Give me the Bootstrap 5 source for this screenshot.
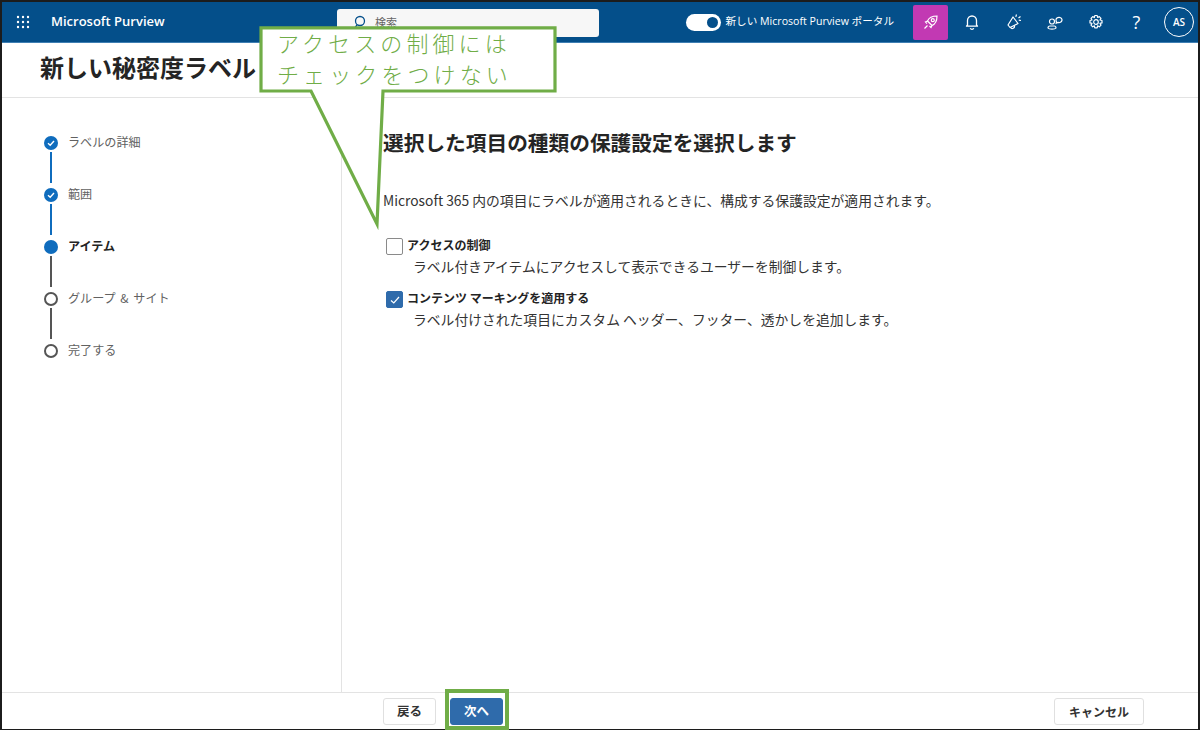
<!DOCTYPE html>
<html lang="ja"><head><meta charset="utf-8"><title>Purview</title>
<link href="https://cdn.jsdelivr.net/npm/bootstrap@5.3.0/dist/css/bootstrap.min.css" rel="stylesheet">
<style>
html,body{height:730px;overflow:hidden;background:#fff}
body{font-family:"Noto Sans CJK JP","Open Sans",sans-serif;color:#242424;font-size:12px;position:relative}
.frame{height:730px;width:1200px;border:2px solid #1c1c1c;border-bottom-width:1px;display:flex;flex-direction:column}
.topbar{height:41px;background:#044f8a;color:#fff;flex:none;border-bottom:1px solid #3f7fb3}
.brand{font-family:"Open Sans",sans-serif;font-weight:600;font-size:13px;margin-left:21px}
.waffle{margin-left:14px;display:block}
.searchbox{position:absolute;left:337px;top:9px;width:262px;height:28px;background:#f7f7f7;border-radius:3px;color:#666;font-size:11px;padding:5px 0 0 38px}
.searchbox svg{position:absolute;left:15px;top:5px}
.spacerbar{width:0;flex:1}
.swtch{width:35px;height:17px;background:#fff;border-radius:9px;position:relative;flex:none}
.swtch::after{content:"";position:absolute;right:3px;top:3px;width:11px;height:11px;border-radius:50%;background:#044f8a}
.portal{font-size:10.6px;margin:0 19px 0 5px;white-space:nowrap;font-family:"Open Sans","Noto Sans CJK JP",sans-serif}
.ticon{width:41px;height:35px;display:flex;align-items:center;justify-content:center;flex:none}
.ticon.pinkb{width:35px;background:#c239b3;border-radius:2px;margin-right:3px}
.ticon.plain{font-size:18px;font-family:"Open Sans",sans-serif}
.ticon.bellb{margin-right:1px}
.avatar{width:30px;height:30px;border:1px solid #fff;border-radius:50%;font-size:10px;font-weight:600;display:flex;align-items:center;justify-content:center;margin:0 4px 0 7px;font-family:"Open Sans",sans-serif;flex:none}
.titlerow{height:55px;flex:none;border-bottom:1px solid #e3e3e3;padding-left:38px;display:flex;align-items:center}
.titlerow h1{font-size:24px;font-weight:700;margin:0 0 5px;color:#242424}
.mainarea{flex:1;min-height:0;display:flex}
.leftrail{width:340px;border-right:1px solid #e3e3e3;padding:36px 0 0 42px;flex:none}
.stepitem{display:flex;height:52px;position:relative;color:#616161}
.stepitem b{color:#242424}
.dot{width:14px;height:14px;border-radius:50%;flex:none;margin-top:2px;display:flex;align-items:center;justify-content:center;background:#0f6cbd;margin-right:10px}
.dot.hollow{background:#fff;border:2px solid #555}
.stepitem:not(:last-child)::after{content:"";position:absolute;left:6px;top:18px;height:31px;width:2px;background:#0f6cbd}
.stepitem.graystep::after{background:#555 !important}
.steptext{line-height:17px;font-size:12.1px;margin-top:-1px;word-spacing:2px}
.content{padding:30px 0 0 41px;flex:1}
.content h2{font-size:20.7px;font-weight:700;margin:0 0 34px;line-height:28px;color:#242424}
.intro{font-size:13.8px;margin:0 0 26px;line-height:20px;color:#333}
.optrow{display:flex;margin-left:3px;margin-bottom:13px}
.cbx{width:17px;height:17px;border:1px solid #8a8a8a;border-radius:2px;background:#fff;flex:none;margin-right:4px;margin-top:2px;display:flex;align-items:center;justify-content:center}
.cbx.checked{background:#2f6bab;border-color:#2f6bab}
.opttitle{font-weight:700;font-size:12px;line-height:17px}
.optdesc{font-size:13.8px;line-height:20px;margin-left:6px;margin-top:3px;color:#333;white-space:nowrap}
.footerbar{height:37px;flex:none;border-top:1px solid #e3e3e3;display:flex;align-items:flex-start;padding-top:5px;position:relative}
.fbtn{height:27px;border:1px solid #e0e0e0;border-radius:3px;background:#fff;font-weight:700;font-size:12.5px;display:flex;align-items:center;justify-content:center;color:#333;padding:0}
.fbtn.backb{width:53px;margin-left:381px}
.fbtn.nextb{width:53px;margin-left:14px;background:#2f6bab;border-color:#2f6bab;color:#fff}
.fbtn.cancelb{width:90px;margin-left:auto;margin-right:54px;font-size:12px}
.highlight{position:absolute;left:445px;top:689px;width:64px;height:41px;border:4px solid #70ad47}
.callout{position:absolute;left:0;top:0;pointer-events:none}
.callouttext{position:absolute;left:277px;top:27px;width:270px;color:#70ad47;font-size:22px;line-height:31px;letter-spacing:4.1px;font-weight:300;white-space:nowrap;font-family:"Noto Sans CJK JP",sans-serif}
</style></head><body>
<div class="frame">
 <header class="topbar d-flex align-items-center">
  <svg class="waffle" width="14" height="14" viewBox="0 0 14 14" fill="#fff"><circle cx="2" cy="2" r="1.2"/><circle cx="7" cy="2" r="1.2"/><circle cx="12" cy="2" r="1.2"/><circle cx="2" cy="7" r="1.2"/><circle cx="7" cy="7" r="1.2"/><circle cx="12" cy="7" r="1.2"/><circle cx="2" cy="12" r="1.2"/><circle cx="7" cy="12" r="1.2"/><circle cx="12" cy="12" r="1.2"/></svg>
  <span class="brand">Microsoft Purview</span>
  <div class="spacerbar"></div>
  <span class="swtch"></span><span class="portal">新しい Microsoft Purview ポータル</span>
  <span class="ticon pinkb"><svg width="18" height="18" viewBox="0 0 18 18" fill="none" stroke="#fff" stroke-width="1.2"><path d="M5.500 8 C7 4.500 10.500 3 15 3 C15 7.500 13.500 11 10 12.500 Z"/><circle cx="10.800" cy="7.200" r="1.500"/><path d="M5.500 8 L3.500 9 L5 10.500M10 12.500 L9 14.500 L7.500 13M2.500 15.500 L5.500 12.500"/></svg></span>
  <span class="ticon plain bellb"><svg width="14" height="16" viewBox="0 0 14 16" fill="none" stroke="#fff" stroke-width="1.3"><path d="M2.500 11 V6.500 a4.500 4.500 0 0 1 9 0 V11 l1 1.200 H1.500 Z" stroke-linejoin="round"/><path d="M5.200 14.200 a2 2 0 0 0 3.600 0"/></svg></span>
  <span class="ticon plain"><svg width="18" height="18" viewBox="0 0 18 18" fill="none" stroke="#fff" stroke-width="1.200" stroke-linejoin="round"><path d="M8 4 L13 10.500 L5 14.500 L3 12 Z"/><path d="M5.500 14.300 a2 2 0 0 0 3.700 -1.800M11.500 1.500 l-.7 2.300M15.500 3.500 l-2 1.500M16 7.500 l-2.200 -.3"/></svg></span>
  <span class="ticon plain"><svg width="18" height="18" viewBox="0 0 18 18" fill="none" stroke="#fff" stroke-width="1.200"><circle cx="6" cy="8.500" r="2.500"/><path d="M2 15 c0 -1.200 1 -2 2 -2 h4.200 c1 0 1.800 .8 1.800 2 c-1 1.500 -7 1.500 -8 0 Z"/><path d="M10 7 a3 2.600 0 1 1 2 2.400 l-1.800 .8 l.3 -1.400 a2.500 2.500 0 0 1 -.5 -1.800 Z"/></svg></span>
  <span class="ticon plain"><svg width="16" height="16" viewBox="0 0 16 16" fill="none" stroke="#fff" stroke-width="1.2"><circle cx="8" cy="8" r="2.300"/><path d="M6.800 1.500 h2.400 l.4 2 1.700 -.9 1.700 1.700 -1 1.700 2 .5 v2.400 l-2 .5 1 1.700 -1.700 1.700 -1.700 -1 -.4 2 h-2.400 l-.4 -2 -1.700 1 -1.700 -1.700 1 -1.700 -2 -.5 v-2.400 l2 -.5 -1 -1.700 1.700 -1.700 1.700 .9 Z" stroke-linejoin="round"/></svg></span>
  <span class="ticon plain">?</span>
  <span class="avatar">AS</span>
 </header>
 <div class="searchbox"><svg width="16" height="18" viewBox="0 0 16 18" fill="none" stroke="#044f8a" stroke-width="1.300"><circle cx="8" cy="7" r="4.500"/><path d="M5 11 L2 15"/></svg>検索</div>
 <div class="titlerow"><h1>新しい秘密度ラベル</h1></div>
 <div class="mainarea">
  <nav class="leftrail">
   <div class="stepitem"><span class="dot"><svg width="10" height="10" viewBox="0 0 10 10" fill="none" stroke="#fff" stroke-width="1.400"><path d="M2 5.200 L4.200 7.200 L8 3"/></svg></span><span class="steptext">ラベルの詳細</span></div>
   <div class="stepitem"><span class="dot"><svg width="10" height="10" viewBox="0 0 10 10" fill="none" stroke="#fff" stroke-width="1.400"><path d="M2 5.200 L4.200 7.200 L8 3"/></svg></span><span class="steptext">範囲</span></div>
   <div class="stepitem graystep"><span class="dot"></span><span class="steptext"><b>アイテム</b></span></div>
   <div class="stepitem graystep"><span class="dot hollow"></span><span class="steptext">グループ &amp; サイト</span></div>
   <div class="stepitem"><span class="dot hollow"></span><span class="steptext">完了する</span></div>
  </nav>
  <main class="content">
   <h2>選択した項目の種類の保護設定を選択します</h2>
   <p class="intro">Microsoft 365 内の項目にラベルが適用されるときに、構成する保護設定が適用されます。</p>
   <div class="optrow"><span class="cbx"></span><div><div class="opttitle">アクセスの制御</div><div class="optdesc">ラベル付きアイテムにアクセスして表示できるユーザーを制御します。</div></div></div>
   <div class="optrow"><span class="cbx checked"><svg width="12" height="12" viewBox="0 0 12 12" fill="none" stroke="#fff" stroke-width="1.200"><path d="M2 6.500 L4.800 9 L10 3"/></svg></span><div><div class="opttitle">コンテンツ マーキングを適用する</div><div class="optdesc">ラベル付けされた項目にカスタム ヘッダー、フッター、透かしを追加します。</div></div></div>
  </main>
 </div>
 <footer class="footerbar">
  <button class="fbtn backb">戻る</button>
  <button class="fbtn nextb">次へ</button>
  <button class="fbtn cancelb">キャンセル</button>
 </footer>
</div>
<div class="highlight"></div>
<svg class="callout" width="1200" height="730" viewBox="0 0 1200 730"><path d="M261 27.800 H555 V91 H383 L377 224 L311 91 H261 Z" fill="#fff" stroke="#70ad47" stroke-width="3.200"/></svg>
<div class="callouttext">アクセスの制御には<br>チェックをつけない</div>
</body></html>
